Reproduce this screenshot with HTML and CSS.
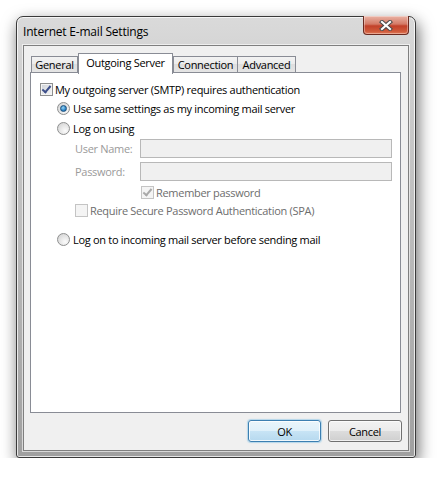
FILE: index.html
```html
<!DOCTYPE html>
<html lang="en">
<head>
    <meta charset="UTF-8">
    <title>Internet E-mail Settings</title>
    <link rel="stylesheet" href="styles.css">
</head>
<body>
    <div class="desk">
        <div class="window">
            <div class="titlebar">
                <span class="title">Internet E-mail Settings</span>
                <div class="close">
                    <svg width="14" height="11" viewBox="0 0 14 11">
                        <path d="M3 2 L11 9 M11 2 L3 9" stroke="#4a4a4a" stroke-width="4.2" stroke-linecap="square"/>
                        <path d="M3 2 L11 9 M11 2 L3 9" stroke="#fff" stroke-width="2.2" stroke-linecap="square"/>
                    </svg>
                </div>
            </div>

            <div class="client">
                <div class="tabs">
                    <div class="tab tab-general">General</div>
                    <div class="tab active">Outgoing Server</div>
                    <div class="tab tab-conn">Connection</div>
                    <div class="tab tab-adv">Advanced</div>
                </div>

                <div class="panel">
                    <div class="row row-first">
                        <span class="check checked"></span>
                        <span class="text">My outgoing server (SMTP) requires authentication</span>
                    </div>
                    <div class="row indent-1">
                        <span class="radio selected"></span>
                        <span class="text">Use same settings as my incoming mail server</span>
                    </div>
                    <div class="row indent-1 row-tall">
                        <span class="radio"></span>
                        <span class="text">Log on using</span>
                    </div>
                    <div class="field-row field-first">
                        <span class="field-label">User Name:</span>
                        <span class="field"></span>
                    </div>
                    <div class="field-row">
                        <span class="field-label">Password:</span>
                        <span class="field"></span>
                    </div>
                    <div class="row row-short indent-3">
                        <span class="check checked disabled"></span>
                        <span class="text muted">Remember password</span>
                    </div>
                    <div class="row row-short indent-2">
                        <span class="check disabled"></span>
                        <span class="text muted">Require Secure Password Authentication (SPA)</span>
                    </div>
                    <div class="row indent-1 row-last">
                        <span class="radio"></span>
                        <span class="text">Log on to incoming mail server before sending mail</span>
                    </div>
                </div>

                <div class="buttons">
                    <button class="btn btn-default">OK</button>
                    <button class="btn">Cancel</button>
                </div>
            </div>
        </div>
    </div>
</body>
</html>
```

FILE: styles.css
```css
body {
    margin: 0;
    background-color: #fff;
    font-family: "Open Sans", "Noto Sans", sans-serif;
    font-size: 11px;
    letter-spacing: -0.3px;
    color: #000;
}
.desk {
    padding: 16px 0 0 16px;
}
.window {
    width: 400px;
    height: 442px;
    box-sizing: border-box;
    border: 1px solid #3a3a3a;
    border-radius: 7px 7px 3px 3px;
    background: linear-gradient(#dadada, #cbcbcb 20%, #b6b6b6 60%, #a0a0a0);
    box-shadow: 2px 6px 16px rgba(0,0,0,0.6), inset 0 0 0 1px rgba(255,255,255,0.75);
    padding: 0 6px 6px 6px;
    display: flex;
    flex-direction: column;
}
.titlebar {
    height: 28px;
    display: flex;
    align-items: center;
}
.title {
    flex: 1;
    padding-top: 1px;
    font-size: 12px;
    letter-spacing: -0.2px;
}
.close {
    align-self: flex-start;
    margin-top: -1px;
    width: 46px;
    height: 19px;
    box-sizing: border-box;
    border: 1px solid #6b2a20;
    border-top: none;
    border-radius: 0 0 4px 4px;
    background: linear-gradient(#eab3a5, #d47a66 45%, #c2412a 55%, #cf5a3b 85%, #e27b5a);
    box-shadow: inset 0 0 0 1px rgba(255,255,255,0.35);
    display: flex;
    align-items: center;
    justify-content: center;
}
.client {
    flex: 1;
    background-color: #f0f0f0;
    border: 1px solid #7f7f7f;
    box-shadow: 0 0 0 1px rgba(255,255,255,0.6);
    display: flex;
    flex-direction: column;
}
.tabs {
    display: flex;
    align-items: flex-end;
    margin: 7px 0 0 7px;
    height: 20px;
    position: relative;
    z-index: 1;
}
.tab {
    box-sizing: border-box;
    height: 17px;
    border: 1px solid #898c95;
    background: linear-gradient(#f3f3f3, #ebebeb 50%, #dedede 50%, #e5e5e5);
    text-align: center;
    line-height: 16px;
}
.tab-general {
    width: 47px;
}
.tab.active {
    width: 95px;
    height: 21px;
    margin-bottom: -1px;
    border-bottom: none;
    background: #fff;
    line-height: 17px;
}
.tab-conn {
    width: 65px;
}
.tab-adv {
    width: 59px;
    margin-left: -1px;
}
.panel {
    margin: -1px 7px 0 6px;
    height: 341px;
    box-sizing: border-box;
    border: 1px solid #898c95;
    background-color: #fff;
    padding: 7px 8px 0 9px;
    display: flex;
    flex-direction: column;
}
.row {
    height: 19px;
    display: flex;
    align-items: center;
}
.row-tall {
    height: 20px;
}
.row-short {
    height: 18px;
}
.row-first {
    gap: 2px;
}
.indent-1 {
    padding-left: 17px;
    gap: 3px;
}
.indent-2 {
    padding-left: 35px;
    gap: 2px;
}
.indent-3 {
    padding-left: 101px;
    gap: 2px;
    margin-top: 2px;
}
.row-last {
    margin-top: 10px;
    height: 20px;
}
.text {
    white-space: nowrap;
}
.muted {
    color: #6d6d6d;
}
.check {
    width: 13px;
    height: 13px;
    box-sizing: border-box;
    border: 1px solid #8e8f8f;
    background: linear-gradient(135deg, #cdd1d7, #f7f7f7);
    box-shadow: inset 0 0 0 1px #f4f4f4;
    position: relative;
    flex-shrink: 0;
}
.check.checked::after {
    content: "";
    position: absolute;
    left: 3px;
    top: 0px;
    width: 3px;
    height: 7px;
    border: solid #3d4f8a;
    border-width: 0 2px 2px 0;
    transform: rotate(40deg);
}
.check.disabled {
    border-color: #c4c4c4;
    background: #f4f4f4;
    box-shadow: none;
}
.check.disabled.checked::after {
    border-color: #a9a9a9;
}
.radio {
    width: 13px;
    height: 13px;
    box-sizing: border-box;
    border-radius: 50%;
    border: 1px solid #8e8f8f;
    background: radial-gradient(circle at 65% 70%, #fbfbfb, #dcdcdc 70%, #c9c9c9);
    position: relative;
    flex-shrink: 0;
}
.radio.selected::after {
    content: "";
    position: absolute;
    left: 2px;
    top: 2px;
    width: 7px;
    height: 7px;
    box-sizing: border-box;
    border-radius: 50%;
    border: 1px solid #1d4f7c;
    background: radial-gradient(circle at 40% 35%, #9ad6f5, #2b83c6 60%, #17609e);
}
.field-row {
    height: 19px;
    margin-top: 4px;
    display: flex;
    align-items: center;
    padding-left: 35px;
}
.field-first {
    margin-top: 1px;
}
.field-label {
    width: 65px;
    color: #9a9a9a;
}
.field {
    flex: 1;
    height: 19px;
    box-sizing: border-box;
    border: 1px solid #b8b8b8;
    background-color: #f0f0f0;
}
.buttons {
    display: flex;
    justify-content: flex-end;
    gap: 7px;
    margin: 7px 6px 0 0;
}
.btn {
    width: 74px;
    height: 22px;
    box-sizing: border-box;
    border: 1px solid #707070;
    border-radius: 3px;
    background: linear-gradient(#f2f2f2, #ebebeb 50%, #dddddd 50%, #cfcfcf);
    box-shadow: inset 0 0 0 1px rgba(255,255,255,0.7);
    font-family: inherit;
    font-size: 11px;
    letter-spacing: -0.3px;
    color: #000;
    padding: 0;
}
.btn-default {
    width: 73px;
    border-color: #3c7fb1;
    background: linear-gradient(#eaf5fb, #dff0fa 50%, #c8e4f5 50%, #b6d9ef);
    box-shadow: inset 0 0 0 1px rgba(255,255,255,0.8), 0 0 1px 1px rgba(120,190,230,0.5);
}
```
